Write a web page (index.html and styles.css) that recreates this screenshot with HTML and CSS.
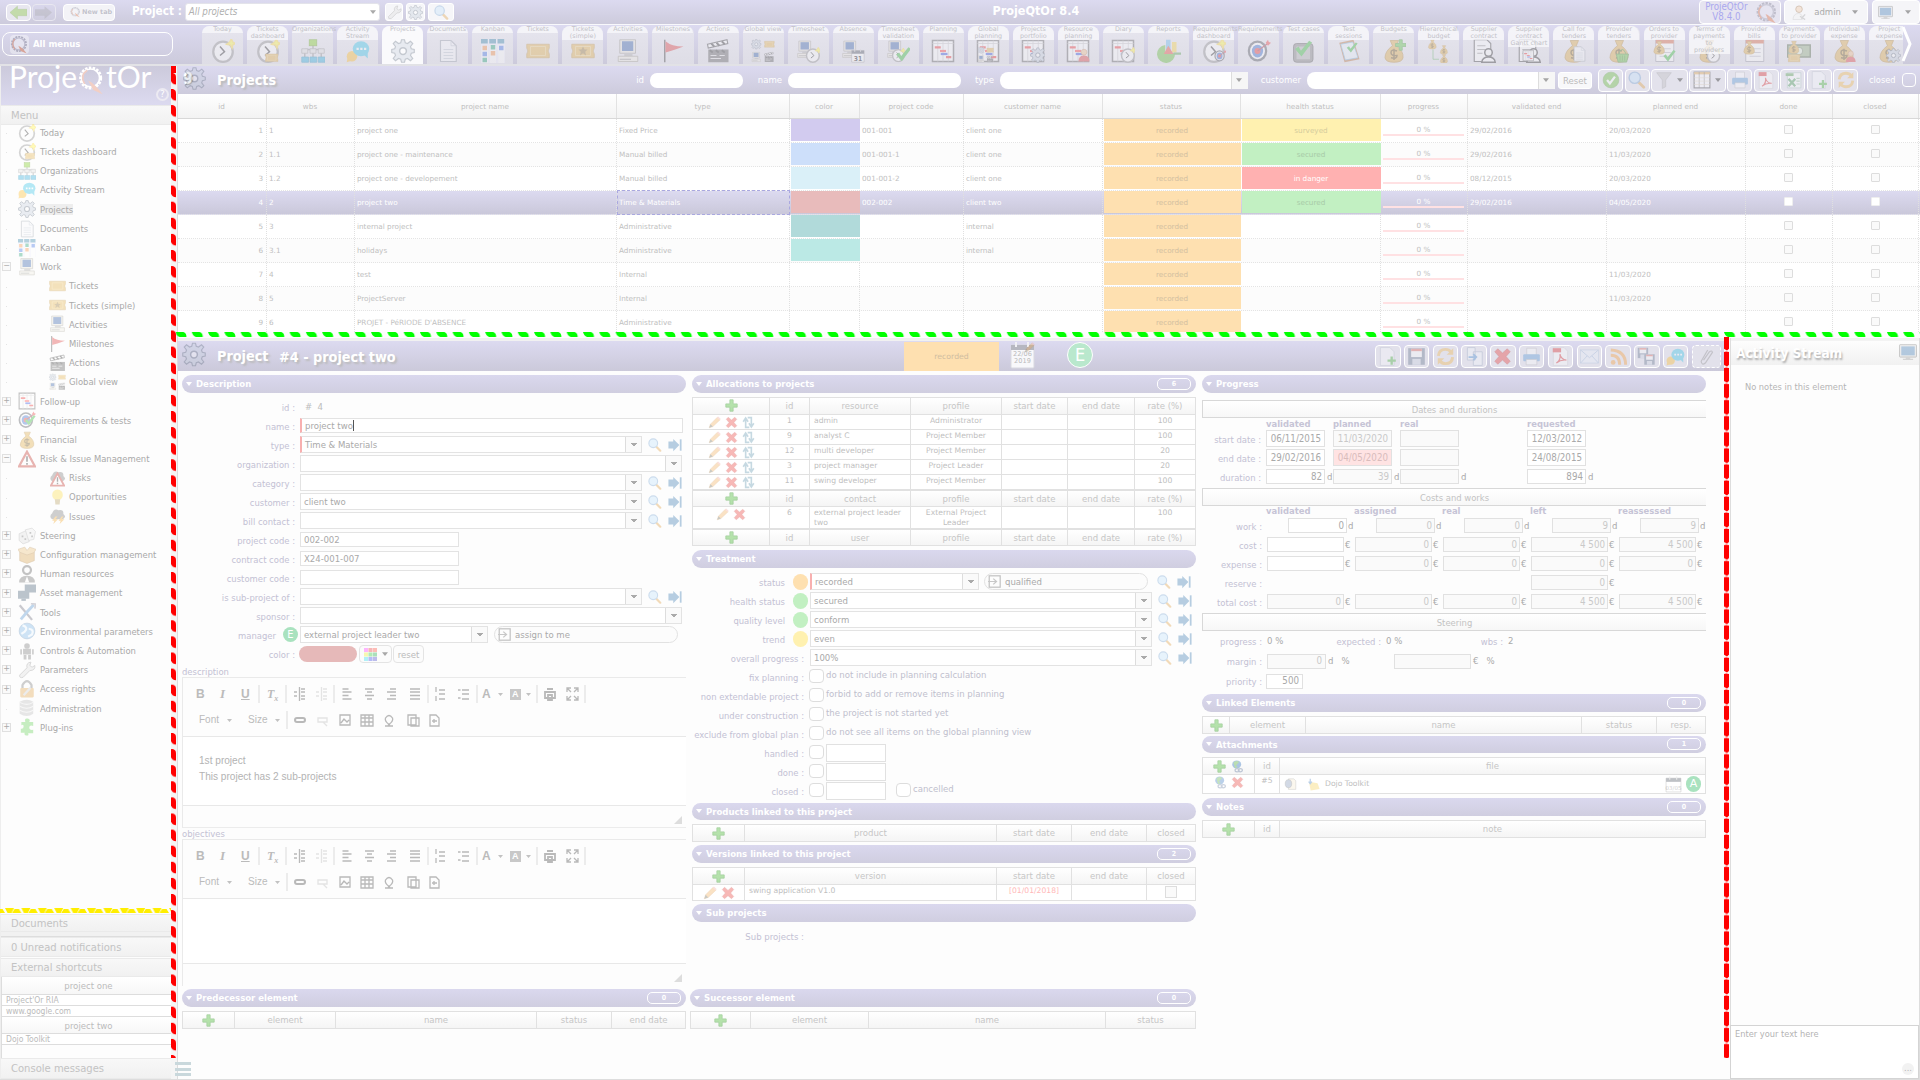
FILE: index.html
```html
<!DOCTYPE html>
<html lang="en">
<head>
<meta charset="utf-8">
<title>ProjeQtOr 8.4</title>
<link rel="stylesheet" href="styles.css">
</head>
<body>
<svg class="defs" aria-hidden="true">
<defs>
<pattern id="dashLeft" width="6" height="16.1" y="6.9" patternUnits="userSpaceOnUse"><path d="M0 0H2Q5 1 5 4V11.500Q1 11.500 0 8Z" fill="#f00"/></pattern>
<pattern id="dashRight" width="6" height="16.1" y="14" patternUnits="userSpaceOnUse"><path d="M0 1Q2 0 5 1V14L3 15.600L0 14Z" fill="#f00"/></pattern>
<pattern id="dashGreen" width="16.3" height="6" x="15.800" patternUnits="userSpaceOnUse"><path d="M0 0H8Q11 1 11 5H4Q1 4 0 0Z" fill="#0f0"/></pattern>
<pattern id="dashYellow" width="16.4" height="6" x="5" patternUnits="userSpaceOnUse"><path d="M0 0H9L6.500 5H2.500Z M7 5L9.500 1H14L16.400 5Z" fill="#fe0"/></pattern>
</defs>
<symbol id="clock" viewBox="0 0 32 32"><ellipse cx="16" cy="17" rx="13" ry="13.500" fill="#fff" stroke="#888" stroke-width="3"/><path d="M12 10L18 17L12 22" fill="none" stroke="#222" stroke-width="2"/><path d="M27 0L29 4L32 6L29 8L28 12L26 8L21 7L25 4Z" fill="#ff3" stroke="#fd3" stroke-width="2"/></symbol>
<symbol id="ticket" viewBox="0 0 32 32"><path d="M1 7H31V12Q28 16 31 20V25H1V20Q4 16 1 12Z" fill="#e2ac3d" stroke="#b98a2d"/><path d="M6 10H26V22H6Z" fill="none" stroke="#f3d68a"/></symbol>
<symbol id="star" viewBox="0 0 32 32"><path d="M16 10L18 14H22L19 17L20 22L16 19L12 22L13 17L10 14H14Z" fill="#97742c"/></symbol>
<symbol id="org" viewBox="0 0 32 32"><path d="M16 8V14M5 14H27M5 14V26M16 14V26M27 14V26" stroke="#888" stroke-width="2"/><rect x="11" y="1" width="10" height="8" fill="#7c1" stroke="#590"/><path d="M1 13h8v6H1zM12 13h8v6h-8zM23 13h8v6h-8z" fill="#ddd" stroke="#888"/><path d="M1 24h9v7H1zM12 24h9v7h-9zM23 24h9v7h-9z" fill="#2ad" stroke="#1789b5"/></symbol>
<symbol id="chat" viewBox="0 0 32 32"><circle cx="8" cy="23" r="7" fill="#fb2"/><path d="M2 25L1 31L7 29Z" fill="#fb2"/><ellipse cx="20" cy="13" rx="11" ry="10" fill="#29c1e8"/><path d="M24 21L29 26L29 17Z" fill="#29c1e8"/><path d="M14 13h3M19 13h3M24 13h3" stroke="#fff" stroke-width="3"/></symbol>
<symbol id="gear" viewBox="0 0 32 32"><path d="M14 1h4l1 4 3 1 4-3 3 3-3 4 1 3 4 1v4l-4 1-1 3 3 4-3 3-4-3-3 1-1 4h-4l-1-4-3-1-4 3-3-3 3-4-1-3-4-1v-4l4-1 1-3-3-4 3-3 4 3 3-1z" fill="#c3cedb" stroke="#5f6c7e" stroke-width="1.500"/><circle cx="16" cy="16" r="4.500" fill="#fff" stroke="#5f6c7e" stroke-width="2"/></symbol>
<symbol id="doc" viewBox="0 0 32 32"><path d="M6 2H20L27 9V30H6Z" fill="#f8f9fc" stroke="#9199a5" stroke-width="1.500"/><path d="M20 2V9H27M10 14H23M10 18H23M10 22H23M10 26H23" fill="none" stroke="#a9b3c2"/></symbol>
<symbol id="kanban" viewBox="0 0 32 32"><rect width="32" height="32" fill="#eef"/><path d="M1 9h8v23H1zM12 9h8v23h-8zM23 9h8v23h-8z" fill="#fff"/><path d="M0 0H9V6H0zM11 0H20V6H11zM22 0H31V6H22z" fill="#2a7ea5"/><path d="M2 9h6v6H2zM13 16h6v6h-6z" fill="#f88b3c"/><path d="M2 17h6v6H2zM24 9h6v6h-6z" fill="#356be5"/><path d="M2 25h6v6H2zM13 8h6v6h-6z" fill="#169c6e"/></symbol>
<symbol id="pc" viewBox="0 0 32 32"><path d="M5 1H26V19H5Z" fill="#e8e5da" stroke="#7c7a70"/><rect x="8" y="3" width="15" height="13" fill="#2857a4"/><path d="M11 19H22V23H11Z" fill="#aaa"/><path d="M3 23H29V30H3Z" fill="#efece1" stroke="#8b8878"/><path d="M5 27H20" stroke="#555"/></symbol>
<symbol id="flag" viewBox="0 0 32 32"><path d="M5 1V31" stroke="#333" stroke-width="2"/><path d="M6 3Q14 10 30 10Q14 16 6 18Z" fill="#d33"/></symbol>
<symbol id="clap" viewBox="0 0 32 32"><path d="M3 14H30V31H3Z" fill="#555"/><path d="M2 7L28 1L29 6L3 12Z" fill="#fff" stroke="#333" stroke-width="1.500"/><path d="M7 6l4 4M14 5l4 4M21 3l4 4M5 15l4 3M13 15l4 3M21 15l4 3" stroke="#222" stroke-width="2.500"/><path d="M6 22H14M18 22H25M6 26H20" stroke="#ddd" stroke-width="1.500"/></symbol>
<symbol id="cal" viewBox="0 0 32 32"><path d="M2 4H30V30H2Z" fill="#fff" stroke="#666"/><path d="M2 4H30V11H2Z" fill="#444b57"/><path d="M9 1V7M22 1V7" stroke="#ccc" stroke-width="2"/></symbol>
<symbol id="calpage" viewBox="0 0 25 27"><rect x="1" y="3" width="23" height="23" rx="1" fill="#f8f8fb" stroke="#d9d9e0"/><path d="M1 3H24V8H1Z" fill="#b6b7c0"/><path d="M6 0V5M18 0V5" stroke="#f0f0f4" stroke-width="2"/></symbol>
<symbol id="tick" viewBox="0 0 32 32"><path d="M2 17L8 13L12 20L26 3L31 6L13 30Z" fill="#28b52b"/></symbol>
<symbol id="plan" viewBox="0 0 32 32"><path d="M2 2H30V30H2Z" fill="#fff" stroke="#555" stroke-width="2"/><path d="M2 6H30M9 2V30M16 2V30M23 2V30" stroke="#bbb"/><path d="M5 11H13M20 24H27" stroke="#e22" stroke-width="3"/><path d="M12 16H20" stroke="#f33" stroke-width="3"/><path d="M13 20H22" stroke="#24d" stroke-width="3"/></symbol>
<symbol id="man" viewBox="0 0 32 32"><circle cx="16" cy="9" r="7" fill="#f0bd86" stroke="#a44f23"/><path d="M3 31Q3 17 16 17T29 31Z" fill="#d33"/></symbol>
<symbol id="chart" viewBox="0 0 32 32"><path d="M12 1h6v17h-6z" fill="#5bb3ec"/><path d="M20 4h6v14h-6z" fill="#f7d038"/><path d="M11 8V18L24 19A12 12 0 1 1 11 8Z" fill="#5bb92c"/><path d="M15 9L22 20H9Z" fill="#e53b2b"/><path d="M22 18H32V21H22Z" fill="#4a9a42"/></symbol>
<symbol id="target" viewBox="0 0 32 32"><ellipse cx="14" cy="16" rx="13" ry="14" fill="#44484f"/><ellipse cx="14" cy="16" rx="10" ry="11" fill="#fff"/><ellipse cx="14" cy="16" rx="7.500" ry="8.500" fill="#2b63c9"/><circle cx="14" cy="16" r="4" fill="#e22"/><path d="M14 16L29 5" stroke="#923" stroke-width="2"/><path d="M25 5L28 1L29 4L32 5L28 9Z" fill="#e33"/></symbol>
<symbol id="case" viewBox="0 0 32 32"><rect x="2" y="6" width="26" height="25" rx="4" fill="#777" stroke="#333"/><rect x="6" y="10" width="18" height="17" fill="#aaa"/></symbol>
<symbol id="clip" viewBox="0 0 32 32"><path d="M3 5L22 1L30 27L10 31Z" fill="#b96b2e"/><path d="M5 7L21 4L28 25L11 28Z" fill="#e7f2fb" stroke="#5ea7e0"/></symbol>
<symbol id="bag" viewBox="0 0 32 32"><path d="M11 2H22L19 9Q29 16 28 25Q27 31 16 31T4 25Q4 16 14 9Z" fill="#dda63a" stroke="#a87415"/><path d="M20 16Q12 13 12 18T20 22Q20 27 12 25M16 13V28" fill="none" stroke="#5f430a" stroke-width="2"/></symbol>
<symbol id="plus" viewBox="0 0 32 32"><path d="M12 2H20V12H30V20H20V30H12V20H2V12H12Z" fill="#4fbf38" stroke="#2a921c" stroke-width="2"/></symbol>
<symbol id="contract" viewBox="0 0 32 32"><path d="M3 1H20L25 6V30H3Z" fill="#fff" stroke="#333" stroke-width="1.500"/><path d="M7 9H18M7 14H18M7 19H14" stroke="#555"/><circle cx="22" cy="18" r="5" fill="#fff" stroke="#222" stroke-width="2"/><path d="M13 31Q14 24 22 24T31 31Z" fill="#fff" stroke="#222" stroke-width="2"/></symbol>
<symbol id="basket" viewBox="0 0 32 32"><path d="M3 13H29L25 30H7Z" fill="#5bbf30" stroke="#37831b" stroke-width="2"/><path d="M8 13Q16 -7 24 13M11 16V27M16 16V27M21 16V27" fill="none" stroke="#37831b" stroke-width="2"/></symbol>
<symbol id="bill" viewBox="0 0 32 32"><path d="M5 1H29V30H5Z" fill="#fff" stroke="#778"/><path d="M5 1H29V6H5Z" fill="#d3542e"/><path d="M10 13H25M10 18H25M10 23H25" stroke="#99a"/></symbol>
<symbol id="money" viewBox="0 0 32 32"><path d="M1 8H31V24H1Z" fill="#8aa878" stroke="#455c39" stroke-width="2"/><circle cx="16" cy="16" r="5" fill="#dfeed5" stroke="#455c39"/></symbol>
<symbol id="warn" viewBox="0 0 32 32"><path d="M16 3L30 29H2Z" fill="#fff" stroke="#c02a20" stroke-width="4"/><path d="M16 11V21M16 23V26" stroke="#222" stroke-width="3"/></symbol>
<symbol id="cloud" viewBox="0 0 32 32"><path d="M6 22Q-1 17 6 11Q9 1 18 5Q28 3 27 12Q34 18 26 22Z" fill="#777"/></symbol>
<symbol id="bolt" viewBox="0 0 32 32"><path d="M12 17L6 25H10L8 31L17 22H12L16 17ZM24 17L18 25H22L20 31L29 22H24L27 17Z" fill="#f5a623"/></symbol>
<symbol id="bulb" viewBox="0 0 32 32"><circle cx="16" cy="12" r="10" fill="#fd4"/><path d="M11 20H21L20 30H12Z" fill="#b59b5a"/></symbol>
<symbol id="dice" viewBox="0 0 32 32"><path d="M2 12L13 7L20 13V26L9 30L2 24Z" fill="#ddd" stroke="#888"/><path d="M13 5L25 2L31 8L28 22L19 24Z" fill="#eee" stroke="#888"/><path d="M8 15v3M13 20v3M22 9v3M25 15v3" stroke="#666" stroke-width="3"/></symbol>
<symbol id="box" viewBox="0 0 32 32"><path d="M3 11H29V26L16 31L3 26Z" fill="#d9a048" stroke="#a06b1e"/><path d="M3 11L0 6L12 2L16 8L21 2L32 6L28 12L16 16Z" fill="#e9bd72" stroke="#a06b1e"/></symbol>
<symbol id="hr" viewBox="0 0 32 32"><circle cx="16" cy="9" r="7" fill="#fff" stroke="#555" stroke-width="4"/><path d="M2 31Q2 19 16 19T30 31Z" fill="#666"/><path d="M16 20L12 31H20Z" fill="#fff"/></symbol>
<symbol id="asset" viewBox="0 0 32 32"><path d="M12 1H32V15H12zM0 12H20V26H0z" fill="#3f5a70"/><path d="M6 26h8v4H6z" fill="#3f5a70"/></symbol>
<symbol id="tools" viewBox="0 0 32 32"><path d="M3 4L25 30" stroke="#667" stroke-width="4"/><path d="M28 3L16 16L5 29" stroke="#4d90cf" stroke-width="5"/><path d="M23 1L31 2L30 10" fill="none" stroke="#889" stroke-width="3"/></symbol>
<symbol id="wrench" viewBox="0 0 32 32"><path d="M30 8L25 11L21 8L23 2Q14 3 16 12L3 25Q2 31 9 29L21 17Q31 17 30 8Z" fill="#ddd" stroke="#888" stroke-width="1.500"/></symbol>
<symbol id="globe" viewBox="0 0 32 32"><circle cx="16" cy="16" r="14" fill="#77b4e6" stroke="#3a6ca3"/><path d="M8 6Q19 9 12 17L6 21M19 12Q29 13 25 22L18 26" fill="none" stroke="#e9f5ff" stroke-width="4"/></symbol>
<symbol id="robot" viewBox="0 0 32 32"><circle cx="16" cy="7" r="5" fill="#777"/><path d="M9 12H23V22H9zM10 23h5v8h-5zM18 23h5v8h-5zM4 13h3v9H4zM25 13h3v9h-3z" fill="#777"/></symbol>
<symbol id="lock" viewBox="0 0 32 32"><path d="M8 16V9Q16 -5 24 9V16" fill="none" stroke="#777" stroke-width="4"/><rect x="4" y="14" width="24" height="17" rx="2" fill="#e0a143"/><path d="M10 27L22 14" stroke="#ccc" stroke-width="4"/></symbol>
<symbol id="db" viewBox="0 0 32 32"><path d="M3 5Q16 -2 27 5V26Q16 34 3 26Z" fill="#bbb"/><path d="M3 6Q16 13 27 6M3 13Q16 20 27 13M3 20Q16 27 27 20" fill="none" stroke="#eee" stroke-width="2"/></symbol>
<symbol id="puzzle" viewBox="0 0 32 32"><path d="M6 7H13Q11 0 17 1T20 7H27V14Q20 12 20 17T27 21V27H18Q20 32 15 31T12 26H5V19Q10 20 10 15T6 13Z" fill="#5fd14f"/></symbol>
<symbol id="mag" viewBox="0 0 32 32"><path d="M18 19L28 29" stroke="#dd9a37" stroke-width="5" stroke-linecap="round"/><circle cx="12" cy="12" r="10" fill="#bfe0fb" stroke="#6f9fd0" stroke-width="2.500"/></symbol>
<symbol id="goto" viewBox="0 0 32 32"><path d="M1 8H12V2L26 16L12 30V24H1Z" fill="#2f74ae"/><path d="M29 3V29" stroke="#2f74ae" stroke-width="4"/></symbol>
<symbol id="pencil" viewBox="0 0 32 32"><path d="M3 29L6 20L23 3L30 9L12 26Z" fill="#f3ab55" stroke="#c77f2d"/><path d="M3 29L6 20L12 26Z" fill="#665"/><path d="M22 4L25 1L31 7L29 10Z" fill="#f3a7a0"/></symbol>
<symbol id="cross" viewBox="0 0 32 32"><path d="M3 8L8 3L16 10L24 3L29 8L22 16L29 24L24 29L16 22L8 29L3 24L10 16Z" fill="#e8322c" stroke="#b91c1c"/></symbol>
<symbol id="swap" viewBox="0 0 32 32"><path d="M18 28H9V8M3 14L9 5L15 14M14 4H23V24M17 18L23 27L29 18" fill="none" stroke="#5c93ab" stroke-width="4"/></symbol>
<symbol id="funnel" viewBox="0 0 32 32"><path d="M3 3H29L19 16V28L13 31V16Z" fill="#bbb" stroke="#888"/></symbol>
<symbol id="cols" viewBox="0 0 32 32"><rect x="2" y="2" width="28" height="28" fill="#fff" stroke="#333" stroke-width="2"/><path d="M2 4H30" stroke="#e2a23b" stroke-width="4"/><path d="M11 2V30M20 2V30" stroke="#333"/><path d="M2 12H30M2 18H30M2 24H30" stroke="#d9c69c"/></symbol>
<symbol id="print" viewBox="0 0 32 32"><path d="M8 2H24V14H8Z" fill="#fff" stroke="#999"/><rect x="2" y="12" width="28" height="12" rx="2" fill="#4f94d4"/><path d="M7 21H25V30H7Z" fill="#fff" stroke="#999"/></symbol>
<symbol id="pdf" viewBox="0 0 32 32"><path d="M4 1H22L28 7V31H4Z" fill="#fff" stroke="#bbb"/><rect x="3" y="2" width="14" height="7" fill="#d22"/><path d="M9 27Q17 22 15 12Q17 21 26 22Q16 21 9 27Z" fill="none" stroke="#d22" stroke-width="2"/></symbol>
<symbol id="csv" viewBox="0 0 32 32"><path d="M6 3H30V30H6Z" fill="#fff" stroke="#7a9"/><path d="M3 4H17V9H3Z" fill="#4a9a42"/><path d="M8 14L20 27M20 14L8 27" stroke="#3b9448" stroke-width="4"/><path d="M22 13h6M22 18h6M22 23h6" stroke="#8bbf8f" stroke-width="2"/></symbol>
<symbol id="newdoc" viewBox="0 0 32 32"><path d="M4 1H20L27 8V31H4Z" fill="#fafbfe" stroke="#9aa4b3"/><path d="M23 16V30M16 23H30" stroke="#3cae2c" stroke-width="4"/></symbol>
<symbol id="refresh" viewBox="0 0 32 32"><path d="M4 15Q5 4 16 4Q22 4 25 8M28 17Q27 28 16 28Q10 28 7 24" fill="none" stroke="#f1b541" stroke-width="5"/><path d="M29 2V13H18ZM3 30V19H14Z" fill="#f1b541"/></symbol>
<symbol id="ok" viewBox="0 0 32 32"><circle cx="16" cy="16" r="14" fill="#5cb82b" stroke="#3f8f17"/><path d="M9 16L14 22L23 10" fill="none" stroke="#fff" stroke-width="4"/></symbol>
<symbol id="save" viewBox="0 0 32 32"><path d="M2 2H30V30H2Z" fill="#5b6d86"/><path d="M7 3H25V17H7Z" fill="#fff"/><path d="M7 3H25V7H7Z" fill="#e05a4a"/><path d="M9 20H23V30H9Z" fill="#c9d2de"/></symbol>
<symbol id="copy" viewBox="0 0 32 32"><path d="M4 1H17V22H4zM14 8H29V31H14z" fill="#f6f9fd" stroke="#92a4bd" stroke-width="1.500"/><path d="M6 17H17M14 12L19 17L14 22" fill="none" stroke="#3e88d0" stroke-width="3"/></symbol>
<symbol id="mail" viewBox="0 0 32 32"><rect x="1" y="5" width="30" height="22" fill="#eaf2fc" stroke="#92b0d6"/><path d="M1 5L16 18L31 5M1 27L12 15M31 27L20 15" fill="none" stroke="#92b0d6" stroke-width="1.500"/></symbol>
<symbol id="rss" viewBox="0 0 32 32"><circle cx="7" cy="26" r="4" fill="#f79a2c"/><path d="M3 14Q18 14 18 30M3 5Q28 6 28 30" fill="none" stroke="#f79a2c" stroke-width="5"/></symbol>
<symbol id="attach" viewBox="0 0 32 32"><path d="M11 22L21 8Q25 5 26 9L14 27Q8 32 7 24L18 5" fill="none" stroke="#888" stroke-width="2"/></symbol>
<symbol id="weblink" viewBox="0 0 32 32"><ellipse cx="14" cy="11" rx="11" ry="10" fill="#3978c4"/><path d="M6 6Q14 0 20 5L12 14L17 17L10 20Z" fill="#59b043"/><path d="M10 25a5 4 0 1 0 10 0a5 4 0 1 0-10 0M18 25a5 4 0 1 0 10 0a5 4 0 1 0-10 0" fill="none" stroke="#6a7fa3" stroke-width="3"/></symbol>
<symbol id="note" viewBox="0 0 32 32"><path d="M5 9L26 13L31 27L9 31Z" fill="#f5cf4e"/><path d="M8 2V14M4 9L8 14L12 9" stroke="#3977bf" stroke-width="3" fill="none"/></symbol>
<symbol id="file" viewBox="0 0 32 32"><path d="M11 2H24L29 7V28H11Z" fill="#f4ead0" stroke="#555"/><ellipse cx="11" cy="14" rx="8" ry="10" fill="#7d93b5" stroke="#333"/></symbol>
<symbol id="monitor" viewBox="0 0 32 32"><rect x="1" y="3" width="30" height="22" rx="1" fill="#ddd" stroke="#555" stroke-width="1.500"/><rect x="4" y="6" width="24" height="16" fill="#2f6fae"/><path d="M12 25H20V28H25V30H7V28H12Z" fill="#999"/></symbol>
<symbol id="user" viewBox="0 0 32 32"><circle cx="15" cy="9" r="7" fill="#f0c39a" stroke="#9a6b3d" stroke-width="2"/><path d="M2 31Q3 18 14 18Q20 18 22 24V31Z" fill="#f0f0f0" stroke="#999"/><path d="M17 24L28 31M28 20L20 29" stroke="#999" stroke-width="3"/></symbol>
<symbol id="qgear" viewBox="0 0 32 32"><circle cx="15" cy="15" r="12" fill="none" stroke="#778" stroke-width="3" stroke-dasharray="3.500 1.500"/><circle cx="15" cy="15" r="10" fill="none" stroke="#99a" stroke-width="2"/><path d="M14 18Q20 20 28 31L18 27Z" fill="#e2642b"/><path d="M8 24Q1 14 8 7" fill="none" stroke="#e2642b" stroke-width="2"/></symbol>
<symbol id="arrowL" viewBox="0 0 32 26"><path d="M0 13L14 1V7H32V19H14V25Z" fill="#7dc52a" stroke="#5a9d14"/></symbol>
<symbol id="arrowR" viewBox="0 0 32 26"><path d="M32 13L18 1V7H0V19H18V25Z" fill="#aaa"/></symbol>
<symbol id="enter" viewBox="0 0 32 32"><rect x="3" y="2" width="27" height="28" fill="#fff" stroke="#555" stroke-width="3"/><path d="M0 16H19M13 9L21 16L13 23" stroke="#666" stroke-width="3" fill="none"/></symbol>
<symbol id="palette" viewBox="0 0 32 32"><path d="M0 0h10v10H0z" fill="#f3f"/><path d="M11 0h10v10H11z" fill="#e33"/><path d="M22 0h10v10H22z" fill="#f43"/><path d="M0 11h10v10H0z" fill="#ee2"/><path d="M11 11h10v10H11z" fill="#2c3"/><path d="M22 11h10v10H22z" fill="#1a4"/><path d="M0 22h10v10H0z" fill="#2de"/><path d="M11 22h10v10H11z" fill="#34e"/><path d="M22 22h10v10H22z" fill="#44c"/></symbol>
<symbol id="globalv" viewBox="0 0 32 32"><use href="#gear" width="14" height="14"/><use href="#ticket" x="17" width="15" height="14"/><use href="#pc" y="17" width="14" height="14"/><use href="#clap" x="17" y="17" width="14" height="14"/></symbol>
<symbol id="caret" viewBox="0 0 8 5"><path d="M0 0H8L4 5Z"/></symbol>
<symbol id="tb1" viewBox="0 0 400 20">
<g fill="none" stroke="#777" stroke-width="1.300"><path d="M60 1V19M87 1V19M135 1V19M229 1V19M278 1V19M338 1V19M386 1V19" stroke="#bbb" stroke-width="1"/>
<path d="M95 8h3M95 12h3M102 5h4M102 8h4M102 12h4M102 15h4M100.500 3v14M143.500 5h6M143.500 8h9M143.500 11.500h6M143.500 15h9M166 5h9M168 8h5M166 11.500h9M168 15h5M191 5h6M188 8h9M191 11.500h6M188 15h9M211 5h10M211 8h10M211 11.500h10M211 15h10M240 6h6M240 10h6M240 15h6M237 3v5M237 12v5M263 6h7M263 10h7M263 15h7M259 6h2.500M259 14h2.500"/><path d="M117 8h3M117 12h3M124 5h4M124 8h4M124 12h4M124 15h4M122.500 3v14" stroke="#ccc"/><path d="M346 8h10v6h-10zM348 5h6M349 11h4v5h-4z" stroke-width="1.800"/><path d="M368 8V4h4M375 4h4v4M379 12v4h-4M372 16h-4v-4M368 4l4 4M379 4l-4 4M379 16l-4-4M368 16l4-4"/></g>
<path d="M299 9h5l-2.500 3zM327 9h5l-2.500 3z" fill="#888"/></symbol>
<symbol id="tb2" viewBox="0 0 250 20"><g fill="none" stroke="#777" stroke-width="1.300"><path d="M88 1V19" stroke="#bbb" stroke-width="1"/><rect x="96" y="8" width="10" height="4" rx="2" stroke-width="2"/><path d="M119 8h9v4h-9zM124 12l4 4" stroke="#ccc"/><path d="M141 5h10v10h-10zM142 13l3-4 3 3 2-2"/><path d="M162 5h12v11h-12zM162 8h12M162 12h12M166 5v11M170 5v11"/><path d="M186 16h3.500v-2q-4-3-3-6 3.500-5 7 0 1 3-3 6v2h3.500"/><path d="M209 5h8v10h-8zM212 8h8v8h-8z"/><path d="M231 5h6l3 3v8h-9zM233 11h5M235 9v4"/></g><path d="M28 9h5l-2.500 3zM76 9h5l-2.500 3z" fill="#888"/></symbol>
</svg>

<div class="app">
<header class="topbar">
  <span class="tbtn w25"><svg class="i17"><use href="#arrowL"/></svg></span>
  <span class="tbtn w24 off"><svg class="i17"><use href="#arrowR"/></svg></span>
  <span class="tbtn newtab"><svg class="i11"><use href="#qgear"/></svg>New tab</span>
  <b class="proj">Project :</b>
  <span class="projsel"><em>All projects</em><svg class="caret"><use href="#caret"/></svg></span>
  <span class="sbtn"><svg class="i15"><use href="#wrench"/></svg></span>
  <span class="sbtn"><svg class="i15"><use href="#gear"/></svg></span>
  <span class="sbtn wide"><svg class="i15"><use href="#mag"/></svg></span>
  <b class="apptitle">ProjeQtOr 8.4</b>
  <span class="ver"><span>ProjeQtOr<br>V8.4.0</span><svg class="i23"><use href="#qgear"/></svg></span>
  <span class="usr"><svg class="i17"><use href="#user"/></svg>admin<svg class="caret"><use href="#caret"/></svg></span>
  <span class="scr"><svg class="i17"><use href="#monitor"/></svg><svg class="caret"><use href="#caret"/></svg></span>
</header>

<nav class="tabbar">
  <span class="allmenus"><svg class="i21"><use href="#qgear"/></svg>All menus</span>
  <div class="tabs">
    <div class="tab"><svg viewBox="0 0 32 32"><use href="#clock"/></svg><span>Today</span></div>
    <div class="tab"><svg viewBox="0 0 32 32"><use href="#clock"/><use href="#ticket" x="12" y="16" width="18" height="18"/></svg><span>Tickets<br>dashboard</span></div>
    <div class="tab"><svg viewBox="0 0 32 32"><use href="#org"/></svg><span>Organizations</span></div>
    <div class="tab"><svg viewBox="0 0 32 32"><use href="#chat"/></svg><span>Activity<br>Stream</span></div>
    <div class="tab on"><svg viewBox="0 0 32 32"><use href="#gear"/></svg><span>Projects</span></div>
    <div class="tab"><svg viewBox="0 0 32 32"><use href="#doc"/></svg><span>Documents</span></div>
    <div class="tab"><svg viewBox="0 0 32 32"><use href="#kanban"/></svg><span>Kanban</span></div>
    <div class="tab"><svg viewBox="0 0 32 32"><use href="#ticket"/></svg><span>Tickets</span></div>
    <div class="tab"><svg viewBox="0 0 32 32"><use href="#ticket"/><use href="#star"/></svg><span>Tickets<br>(simple)</span></div>
    <div class="tab"><svg viewBox="0 0 32 32"><use href="#pc"/></svg><span>Activities</span></div>
    <div class="tab"><svg viewBox="0 0 32 32"><use href="#flag"/></svg><span>Milestones</span></div>
    <div class="tab"><svg viewBox="0 0 32 32"><use href="#clap"/></svg><span>Actions</span></div>
    <div class="tab"><svg viewBox="0 0 32 32"><use href="#globalv"/></svg><span>Global view</span></div>
    <div class="tab"><svg viewBox="0 0 32 32"><use href="#pc" width="24" height="28"/><use href="#clock" x="12" y="11" width="21" height="21"/></svg><span>Timesheet</span></div>
    <div class="tab"><svg viewBox="0 0 32 32"><use href="#pc" width="24" height="28"/><use href="#cal" x="13" y="13" width="19" height="19"/><text x="17" y="29" font-size="9" font-weight="bold">31</text></svg><span>Absence</span></div>
    <div class="tab"><svg viewBox="0 0 32 32"><use href="#pc" width="24" height="28"/><use href="#clock" x="7" y="12" width="19" height="19"/><use href="#tick" x="12" y="9" width="22" height="22"/></svg><span>Timesheet<br>validation</span></div>
    <div class="tab"><svg viewBox="0 0 32 32"><use href="#plan"/></svg><span>Planning</span></div>
    <div class="tab"><svg viewBox="0 0 32 32"><use href="#plan"/><use href="#globalv" x="2" y="10" width="22" height="22"/></svg><span>Global<br>planning</span></div>
    <div class="tab"><svg viewBox="0 0 32 32"><use href="#plan"/><use href="#gear" x="12" y="11" width="21" height="21"/></svg><span>Projects<br>portfolio</span></div>
    <div class="tab"><svg viewBox="0 0 32 32"><use href="#plan"/><use href="#man" x="15" y="11" width="18" height="21"/></svg><span>Resource<br>planning</span></div>
    <div class="tab"><svg viewBox="0 0 32 32"><use href="#plan"/><use href="#clock" x="12" y="11" width="21" height="21"/></svg><span>Diary</span></div>
    <div class="tab"><svg viewBox="0 0 32 32"><use href="#chart"/></svg><span>Reports</span></div>
    <div class="tab"><svg viewBox="0 0 32 32"><use href="#clock"/><use href="#target" x="16" y="14" width="17" height="17"/></svg><span>Requirements<br>dashboard</span></div>
    <div class="tab"><svg viewBox="0 0 32 32"><use href="#target"/></svg><span>Requirements</span></div>
    <div class="tab"><svg viewBox="0 0 32 32"><use href="#case"/><use href="#tick" y="0" width="30" height="25"/></svg><span>Test cases</span></div>
    <div class="tab"><svg viewBox="0 0 32 32"><use href="#clip"/><use href="#tick" x="10" y="3" width="20" height="16"/></svg><span>Test<br>sessions</span></div>
    <div class="tab"><svg viewBox="0 0 32 32"><use href="#bag"/><use href="#plus" x="17" y="0" width="16" height="16"/></svg><span>Budgets</span></div>
    <div class="tab"><svg viewBox="0 0 32 32"><use href="#bag" width="14" height="14"/><use href="#bag" x="16" y="8" width="13" height="13"/><use href="#bag" x="16" y="20" width="13" height="13"/><path d="M8 14V27H16" fill="none" stroke="#4a4"/></svg><span>Hierarchical<br>budget</span></div>
    <div class="tab"><svg viewBox="0 0 32 32"><use href="#contract"/></svg><span>Supplier<br>contract</span></div>
    <div class="tab"><svg viewBox="0 0 32 32"><use href="#contract"/><use href="#plan" x="6" y="14" width="18" height="16"/></svg><span>Supplier<br>contract<br>Gantt chart</span></div>
    <div class="tab"><svg viewBox="0 0 32 32"><use href="#bag"/><use href="#doc" x="12" y="9" width="22" height="22"/></svg><span>Call for<br>tenders</span></div>
    <div class="tab"><svg viewBox="0 0 32 32"><use href="#bag"/><use href="#basket" x="10" y="12" width="21" height="20"/></svg><span>Provider<br>tenders</span></div>
    <div class="tab"><svg viewBox="0 0 32 32"><use href="#bill"/><use href="#bag" y="2" width="19" height="19"/><use href="#tick" x="13" y="13" width="20" height="18"/></svg><span>Orders to<br>provider</span></div>
    <div class="tab"><svg viewBox="0 0 32 32"><use href="#bag"/><use href="#clock" x="12" y="12" width="20" height="20"/></svg><span>Terms of<br>payments<br>to<br>providers</span></div>
    <div class="tab"><svg viewBox="0 0 32 32"><use href="#bill"/><use href="#bag" y="2" width="19" height="19"/></svg><span>Provider<br>bills</span></div>
    <div class="tab"><svg viewBox="0 0 32 32"><use href="#money"/><use href="#bag" y="2" width="18" height="18"/><use href="#ticket" x="1" y="17" width="17" height="17"/></svg><span>Payments<br>to provider</span></div>
    <div class="tab"><svg viewBox="0 0 32 32"><use href="#bag"/><use href="#man" x="17" y="14" width="16" height="18"/></svg><span>Individual<br>expense</span></div>
    <div class="tab"><svg viewBox="0 0 32 32"><use href="#bag"/><use href="#gear" x="12" y="12" width="20" height="20"/></svg><span>Project<br>expense</span></div>
  </div>
  <svg class="more" viewBox="0 0 12 36"><path d="M2 1L9 18L2 35" fill="none" stroke="#fff" stroke-width="3"/></svg>
</nav>

<div class="main">
<aside class="side">
  <div class="logo"><span>Proje<svg viewBox="0 0 30 34"><circle cx="14" cy="14" r="12" fill="none" stroke="#fff" stroke-width="3" stroke-dasharray="3 1.500"/><circle cx="14" cy="14" r="10.500" fill="none" stroke="#fff" stroke-width="2"/><path d="M7 21Q1 11 10 5" fill="none" stroke="#f0cdc4" stroke-width="2"/><path d="M11 17Q18 20 28 33L17 28Z" fill="#f3cfc4"/></svg>tOr</span><i>?</i></div>
  <div class="acc menuhead">Menu</div>
  <div class="tree">
    <div><svg><use href="#clock"/></svg>Today</div>
    <div><svg><use href="#clock"/><use href="#ticket" x="7" y="8" width="10" height="10"/></svg>Tickets dashboard</div>
    <div><svg><use href="#org"/></svg>Organizations</div>
    <div><svg><use href="#chat"/></svg>Activity Stream</div>
    <div><svg><use href="#gear"/></svg><mark>Projects</mark></div>
    <div><svg><use href="#doc"/></svg>Documents</div>
    <div><svg><use href="#kanban"/></svg>Kanban</div>
    <div class="x"><b>−</b><svg><use href="#pc"/></svg>Work</div>
    <div class="c"><svg><use href="#ticket"/></svg>Tickets</div>
    <div class="c"><svg><use href="#ticket"/><use href="#star"/></svg>Tickets (simple)</div>
    <div class="c"><svg><use href="#pc"/></svg>Activities</div>
    <div class="c"><svg><use href="#flag"/></svg>Milestones</div>
    <div class="c"><svg><use href="#clap"/></svg>Actions</div>
    <div class="c"><svg><use href="#globalv"/></svg>Global view</div>
    <div class="x"><b>+</b><svg><use href="#plan"/></svg>Follow-up</div>
    <div class="x"><b>+</b><svg><use href="#target"/><use href="#tick" x="6" y="3" width="12" height="12"/></svg>Requirements &amp; tests</div>
    <div class="x"><b>+</b><svg><use href="#bag"/></svg>Financial</div>
    <div class="x"><b>−</b><svg><use href="#warn"/></svg>Risk &amp; Issue Management</div>
    <div class="c"><svg><use href="#cloud"/><use href="#warn" x="1" y="3" width="15" height="15"/></svg>Risks</div>
    <div class="c"><svg><use href="#bulb"/></svg>Opportunities</div>
    <div class="c"><svg><use href="#cloud"/><use href="#bolt"/></svg>Issues</div>
    <div class="x"><b>+</b><svg><use href="#dice"/></svg>Steering</div>
    <div class="x"><b>+</b><svg><use href="#box"/></svg>Configuration management</div>
    <div class="x"><b>+</b><svg><use href="#hr"/></svg>Human resources</div>
    <div class="x"><b>+</b><svg><use href="#asset"/></svg>Asset management</div>
    <div class="x"><b>+</b><svg><use href="#tools"/></svg>Tools</div>
    <div class="x"><b>+</b><svg><use href="#globe"/></svg>Environmental parameters</div>
    <div class="x"><b>+</b><svg><use href="#robot"/></svg>Controls &amp; Automation</div>
    <div class="x"><b>+</b><svg><use href="#wrench"/></svg>Parameters</div>
    <div class="x"><b>+</b><svg><use href="#lock"/></svg>Access rights</div>
    <div><svg><use href="#db"/></svg>Administration</div>
    <div class="x"><b>+</b><svg><use href="#puzzle"/></svg>Plug-ins</div>
  </div>
  <svg class="ydash"><rect width="171" height="6" fill="url(#dashYellow)"/></svg>
  <div class="acc a1">Documents</div>
  <div class="sp"></div>
  <div class="acc a2">0 Unread notifications</div>
  <div class="acc a3">External shortcuts</div>
  <div class="links"><p class="h">project one</p><p>Project'Or RIA</p><p>www.google.com</p><p class="h">project two</p><p>Dojo Toolkit</p></div>
  <div class="acc a4">Console messages</div>
</aside>
<div class="split"><svg><rect width="5" height="7" fill="#f00"/><rect width="6" height="992" fill="url(#dashLeft)"/></svg></div>

<div class="content">
<section class="list">
  <div class="listhead">
    <span class="cnt"><svg><use href="#gear"/></svg><b>9</b></span><h1>Projects</h1>
    <div class="filters">
      <label>id</label><i class="pill f1"></i><label>name</label><i class="pill f2"></i><label>type</label><i class="combo"><svg class="caret"><use href="#caret"/></svg></i><label>customer</label><i class="combo"><svg class="caret"><use href="#caret"/></svg></i>
      <span class="reset">Reset</span>
    </div>
    <div class="tools">
      <span><svg><use href="#ok"/></svg></span><span><svg><use href="#mag"/></svg></span><span class="w"><svg><use href="#funnel"/></svg><svg class="caret"><use href="#caret"/></svg></span><span class="w"><svg><use href="#cols"/></svg><svg class="caret"><use href="#caret"/></svg></span><span><svg><use href="#print"/></svg></span><span><svg><use href="#pdf"/></svg></span><span><svg><use href="#csv"/></svg></span><span><svg><use href="#newdoc"/></svg></span><span><svg><use href="#refresh"/></svg></span>
    </div>
    <label class="cl">closed</label><i class="ck"></i>
  </div>
  <div class="row head"><span>id</span><span>wbs</span><span>project name</span><span>type</span><span>color</span><span>project code</span><span>customer name</span><span>status</span><span>health status</span><span>progress</span><span>validated end</span><span>planned end</span><span>done</span><span>closed</span></div>
  <div class="row"><span class="r">1</span><span>1</span><span>project one</span><span>Fixed Price</span><span class="k violet"></span><span>001-001</span><span>client one</span><span class="k rec">recorded</span><span class="k yel">surveyed</span><span class="pg">0 %</span><span>29/02/2016</span><span>20/03/2020</span><span class="cb"><i></i></span><span class="cb"><i></i></span></div>
  <div class="row alt"><span class="r">2</span><span>1.1</span><span>project one - maintenance</span><span>Manual billed</span><span class="k blue"></span><span>001-001-1</span><span>client one</span><span class="k rec">recorded</span><span class="k grn">secured</span><span class="pg">0 %</span><span>29/02/2016</span><span>11/03/2020</span><span class="cb"><i></i></span><span class="cb"><i></i></span></div>
  <div class="row"><span class="r">3</span><span>1.2</span><span>project one - developement</span><span>Manual billed</span><span class="k sky"></span><span>001-001-2</span><span>client one</span><span class="k rec">recorded</span><span class="k red">in danger</span><span class="pg">0 %</span><span>08/12/2015</span><span>20/03/2020</span><span class="cb"><i></i></span><span class="cb"><i></i></span></div>
  <div class="row sel"><span class="r">4</span><span>2</span><span>project two</span><span class="foc">Time &amp; Materials</span><span class="k brick"></span><span>002-002</span><span>client two</span><span class="k rec">recorded</span><span class="k grn">secured</span><span class="pg">0 %</span><span>29/02/2016</span><span>04/05/2020</span><span class="cb"><i></i></span><span class="cb"><i></i></span></div>
  <div class="row"><span class="r">5</span><span>3</span><span>internal project</span><span>Administrative</span><span class="k teal"></span><span></span><span>internal</span><span class="k rec">recorded</span><span></span><span class="pg">0 %</span><span></span><span></span><span class="cb"><i></i></span><span class="cb"><i></i></span></div>
  <div class="row alt"><span class="r">6</span><span>3.1</span><span>holidays</span><span>Administrative</span><span class="k aqua"></span><span></span><span>internal</span><span class="k rec">recorded</span><span></span><span class="pg">0 %</span><span></span><span></span><span class="cb"><i></i></span><span class="cb"><i></i></span></div>
  <div class="row"><span class="r">7</span><span>4</span><span>test</span><span>Internal</span><span></span><span></span><span></span><span class="k rec">recorded</span><span></span><span class="pg">0 %</span><span></span><span>11/03/2020</span><span class="cb"><i></i></span><span class="cb"><i></i></span></div>
  <div class="row alt"><span class="r">8</span><span>5</span><span>ProjectServer</span><span>Internal</span><span></span><span></span><span></span><span class="k rec">recorded</span><span></span><span class="pg">0 %</span><span></span><span>11/03/2020</span><span class="cb"><i></i></span><span class="cb"><i></i></span></div>
  <div class="row last"><span class="r">9</span><span>6</span><span>PROJET - PéRIODE D'ABSENCE</span><span>Administrative</span><span></span><span></span><span></span><span class="k rec">recorded</span><span></span><span class="pg">0 %</span><span></span><span></span><span class="cb"><i></i></span><span class="cb"><i></i></span></div>
</section>
<svg class="gdash"><rect width="1744" height="6" fill="url(#dashGreen)"/></svg>

<div class="lower">
<section class="detail">
  <div class="dhead">
    <svg class="g"><use href="#gear"/></svg><h1>Project</h1><h1 class="nm">#4 - project two</h1>
    <span class="st">recorded</span>
    <span class="date"><svg><use href="#calpage"/></svg><b>22/06<br>2019</b><svg class="pen"><use href="#pencil"/></svg></span>
    <span class="ava">E</span>
    <div class="dtools"><span><svg><use href="#newdoc"/></svg></span><span><svg><use href="#save"/></svg></span><span><svg><use href="#refresh"/></svg></span><span><svg><use href="#copy"/></svg></span><span><svg><use href="#cross"/></svg></span><span><svg><use href="#print"/></svg></span><span><svg><use href="#pdf"/></svg></span><span><svg><use href="#mail"/></svg></span><span><svg><use href="#rss"/></svg></span><span><svg viewBox="0 0 32 32"><use href="#save" width="20" height="20"/><use href="#save" x="11" y="11" width="20" height="20"/></svg></span><span><svg><use href="#chat"/></svg></span><span class="dash"><svg><use href="#attach"/></svg></span></div>
  </div>
  <div class="cols">
  <div class="col c1">
    <h2>Description</h2>
    <div class="form f14">
      <div><label>id :</label><span class="plain">#&nbsp; 4</span></div>
      <div><label>name :</label><span class="in w383 req">project two<i class="cur"></i></span></div>
      <div><label>type :</label><span class="se w342 req">Time &amp; Materials</span><svg class="mg"><use href="#mag"/></svg><svg class="go"><use href="#goto"/></svg></div>
      <div><label>organization :</label><span class="se w382"></span></div>
      <div><label>category :</label><span class="se w342"></span><svg class="mg"><use href="#mag"/></svg><svg class="go"><use href="#goto"/></svg></div>
      <div><label>customer :</label><span class="se w342">client two</span><svg class="mg"><use href="#mag"/></svg><svg class="go"><use href="#goto"/></svg></div>
      <div><label>bill contact :</label><span class="se w342"></span><svg class="mg"><use href="#mag"/></svg><svg class="go"><use href="#goto"/></svg></div>
      <div><label>project code :</label><span class="in w159">002-002</span></div>
      <div><label>contract code :</label><span class="in w159">X24-001-007</span></div>
      <div><label>customer code :</label><span class="in w159"></span></div>
      <div><label>is sub-project of :</label><span class="se w342"></span><svg class="mg"><use href="#mag"/></svg><svg class="go"><use href="#goto"/></svg></div>
      <div><label>sponsor :</label><span class="se w382"></span></div>
      <div class="mgr"><label>manager</label><b class="av">E</b><span class="se w188">external project leader two</span><span class="act w184"><svg><use href="#enter"/></svg>assign to me</span></div>
      <div class="clr"><label>color :</label><i class="swatch"></i><span class="pick"><svg><use href="#palette"/></svg><svg class="caret"><use href="#caret"/></svg></span><span class="rst">reset</span></div>
    </div>
    <p class="cap">description</p>
    <div class="ed">
      <div class="bar"><div class="l1"><svg viewBox="0 0 400 20"><use href="#tb1"/></svg><b>B</b><em>I</em><u>U</u><em class="tx">T<sub>x</sub></em><b class="ca">A</b><b class="cb2">A</b></div><div class="l2"><svg viewBox="0 0 250 20"><use href="#tb2"/></svg><span>Font</span><span>Size</span></div></div>
      <div class="body"><p>1st project</p><p>This project has 2 sub-projects</p></div>
      <div class="foot"><svg viewBox="0 0 8 8"><path d="M8 0V8H0Z" fill="#ddd"/></svg></div>
    </div>
    <p class="cap cap2">objectives</p>
    <div class="ed e2">
      <div class="bar"><div class="l1"><svg viewBox="0 0 400 20"><use href="#tb1"/></svg><b>B</b><em>I</em><u>U</u><em class="tx">T<sub>x</sub></em><b class="ca">A</b><b class="cb2">A</b></div><div class="l2"><svg viewBox="0 0 250 20"><use href="#tb2"/></svg><span>Font</span><span>Size</span></div></div>
      <div class="body"></div>
      <div class="foot"><svg viewBox="0 0 8 8"><path d="M8 0V8H0Z" fill="#ddd"/></svg></div>
    </div>
    <h2 class="pre">Predecessor element<i>0</i></h2>
    <div class="t tpre th"><span><svg><use href="#plus"/></svg></span><span>element</span><span>name</span><span>status</span><span>end date</span></div>
  </div>

  <div class="col c2">
    <h2>Allocations to projects<i>6</i></h2>
    <div class="alloc">
      <div class="t ta th"><span><svg><use href="#plus"/></svg></span><span>id</span><span>resource</span><span>profile</span><span>start date</span><span>end date</span><span>rate (%)</span></div>
      <div class="t ta"><span class="ic"><svg><use href="#pencil"/></svg><svg><use href="#cross"/></svg><svg><use href="#swap"/></svg></span><span>1</span><span class="lf">admin</span><span>Administrator</span><span></span><span></span><span>100</span></div>
      <div class="t ta"><span class="ic"><svg><use href="#pencil"/></svg><svg><use href="#cross"/></svg><svg><use href="#swap"/></svg></span><span>9</span><span class="lf">analyst C</span><span>Project Member</span><span></span><span></span><span>100</span></div>
      <div class="t ta"><span class="ic"><svg><use href="#pencil"/></svg><svg><use href="#cross"/></svg><svg><use href="#swap"/></svg></span><span>12</span><span class="lf">multi developer</span><span>Project Member</span><span></span><span></span><span>20</span></div>
      <div class="t ta"><span class="ic"><svg><use href="#pencil"/></svg><svg><use href="#cross"/></svg><svg><use href="#swap"/></svg></span><span>3</span><span class="lf">project manager</span><span>Project Leader</span><span></span><span></span><span>20</span></div>
      <div class="t ta"><span class="ic"><svg><use href="#pencil"/></svg><svg><use href="#cross"/></svg><svg><use href="#swap"/></svg></span><span>11</span><span class="lf">swing developer</span><span>Project Member</span><span></span><span></span><span>100</span></div>
      <div class="t ta th"><span><svg><use href="#plus"/></svg></span><span>id</span><span>contact</span><span>profile</span><span>start date</span><span>end date</span><span>rate (%)</span></div>
      <div class="t ta tall"><span class="ic"><svg><use href="#pencil"/></svg><svg><use href="#cross"/></svg></span><span>6</span><span class="lf">external project leader<br>two</span><span>External Project<br>Leader</span><span></span><span></span><span>100</span></div>
      <div class="t ta th"><span><svg><use href="#plus"/></svg></span><span>id</span><span>user</span><span>profile</span><span>start date</span><span>end date</span><span>rate (%)</span></div>
    </div>
    <h2 class="tre">Treatment</h2>
    <div class="form f2c">
      <div><label class="nc">status</label><b class="dot o"></b><span class="se w169 req">recorded</span><span class="act w164"><svg><use href="#enter"/></svg>qualified</span><svg class="mg"><use href="#mag"/></svg><svg class="go"><use href="#goto"/></svg></div>
      <div><label class="nc">health status</label><b class="dot g"></b><span class="se w342">secured</span><svg class="mg"><use href="#mag"/></svg><svg class="go"><use href="#goto"/></svg></div>
      <div><label class="nc">quality level</label><b class="dot g"></b><span class="se w342">conform</span><svg class="mg"><use href="#mag"/></svg><svg class="go"><use href="#goto"/></svg></div>
      <div><label class="nc">trend</label><b class="dot y"></b><span class="se w342">even</span><svg class="mg"><use href="#mag"/></svg><svg class="go"><use href="#goto"/></svg></div>
      <div><label>overall progress :</label><span class="se w342">100%</span><svg class="mg"><use href="#mag"/></svg><svg class="go"><use href="#goto"/></svg></div>
      <div><label>fix planning :</label><i class="chk"></i><em>do not include in planning calculation</em></div>
      <div><label>non extendable project :</label><i class="chk"></i><em>forbid to add or remove items in planning</em></div>
      <div><label>under construction :</label><i class="chk"></i><em>the project is not started yet</em></div>
      <div><label>exclude from global plan :</label><i class="chk"></i><em>do not see all items on the global planning view</em></div>
      <div><label>handled :</label><i class="chk"></i><i class="dt"></i></div>
      <div><label>done :</label><i class="chk"></i><i class="dt"></i></div>
      <div><label>closed :</label><i class="chk"></i><i class="dt"></i><i class="chk c2k"></i><em>cancelled</em></div>
    </div>
    <h2 class="prod">Products linked to this project</h2>
    <div class="t tv th"><span><svg><use href="#plus"/></svg></span><span>product</span><span>start date</span><span>end date</span><span>closed</span></div>
    <h2 class="vers">Versions linked to this project<i>2</i></h2>
    <div class="t tv th"><span><svg><use href="#plus"/></svg></span><span>version</span><span>start date</span><span>end date</span><span>closed</span></div>
    <div class="t tv vr"><span class="ic"><svg><use href="#pencil"/></svg><svg><use href="#cross"/></svg></span><span class="lf">swing application V1.0</span><span class="pink">[01/01/2018]</span><span></span><span><i class="bx"></i></span></div>
    <h2 class="sub">Sub projects</h2>
    <p class="sublab">Sub projects :</p>
    <div class="succ">
      <h2>Successor element<i>0</i></h2>
      <div class="t tsu th"><span><svg><use href="#plus"/></svg></span><span>element</span><span>name</span><span>status</span></div>
    </div>
  </div>

  <div class="col c3">
    <h2>Progress</h2>
    <div class="band b1">Dates and durations</div>
    <div class="g1 hd"><b></b><b>validated</b><b>planned</b><b>real</b><b></b><b>requested</b></div>
    <div class="g1"><label>start date :</label><i class="v">06/11/2015</i><i class="v ro">11/03/2020</i><i class="v ro"></i><s></s><i class="v">12/03/2012</i></div>
    <div class="g1"><label>end date :</label><i class="v">29/02/2016</i><i class="v ro late">04/05/2020</i><i class="v ro"></i><s></s><i class="v">24/08/2015</i></div>
    <div class="g1 du"><label>duration :</label><span><i class="v">82</i>d</span><span><i class="v ro">39</i>d</span><span><i class="v ro"></i>d</span><s></s><span><i class="v">894</i>d</span></div>
    <div class="band b2">Costs and works</div>
    <div class="g2 hd"><b></b><b>validated</b><b>assigned</b><b>real</b><b>left</b><b>reassessed</b></div>
    <div class="g2 wk"><label>work :</label><span><i class="v">0</i>d</span><span><i class="v ro">0</i>d</span><span><i class="v ro">0</i>d</span><span><i class="v ro">9</i>d</span><span><i class="v ro">9</i>d</span></div>
    <div class="g2"><label>cost :</label><span><i class="v"></i>€</span><span><i class="v ro">0</i>€</span><span><i class="v ro">0</i>€</span><span><i class="v ro">4 500</i>€</span><span><i class="v ro">4 500</i>€</span></div>
    <div class="g2"><label>expense :</label><span><i class="v"></i>€</span><span><i class="v ro">0</i>€</span><span><i class="v ro">0</i>€</span><span><i class="v ro">0</i>€</span><span><i class="v ro">0</i>€</span></div>
    <div class="g2"><label>reserve :</label><s></s><s></s><s></s><span><i class="v ro">0</i>€</span></div>
    <div class="g2"><label>total cost :</label><span><i class="v ro">0</i>€</span><span><i class="v ro">0</i>€</span><span><i class="v ro">0</i>€</span><span><i class="v ro">4 500</i>€</span><span><i class="v ro">4 500</i>€</span></div>
    <div class="band b3">Steering</div>
    <div class="ln"><label>progress :</label><q class="q1">0 %</q><label class="q2">expected :</label><q class="q3">0 %</q><label class="q4">wbs :</label><q>2</q></div>
    <div class="ln"><label>margin :</label><i class="v ro m1">0</i><q class="m2">d&nbsp;&nbsp; %</q><i class="v ro m3"></i><q>€&nbsp;&nbsp; %</q></div>
    <div class="ln"><label>priority :</label><i class="v m4">500</i></div>
    <h2 class="lk">Linked Elements<i>0</i></h2>
    <div class="t tl th"><span><svg><use href="#plus"/></svg></span><span>element</span><span>name</span><span>status</span><span>resp.</span></div>
    <h2 class="at">Attachments<i>1</i></h2>
    <div class="t tat th"><span><svg><use href="#plus"/></svg><svg><use href="#weblink"/></svg></span><span>id</span><span>file</span></div>
    <div class="t tat ar"><span class="ic"><svg><use href="#weblink"/></svg><svg><use href="#cross"/></svg></span><span>#5</span><span class="fl"><svg><use href="#file"/></svg><svg class="n"><use href="#note"/></svg>Dojo Toolkit<span class="mini"><svg><use href="#cal"/></svg><small>03/05</small></span><b class="av">A</b></span></div>
    <h2 class="nt">Notes<i>0</i></h2>
    <div class="t tn th"><span><svg><use href="#plus"/></svg></span><span>id</span><span>note</span></div>
  </div>
  </div>
</section>
<div class="split2"><svg><rect width="5" height="721" fill="url(#dashRight)"/></svg></div>
<section class="stream">
  <div class="shead"><b>Activity Stream</b><svg><use href="#monitor"/></svg></div>
  <p>No notes in this element</p>
  <div class="ta2"><span>Enter your text here</span><i>...</i></div>
</section>
</div>
</div>
</div>
<div class="burger"><i></i><i></i><i></i></div>
</div>
</body>
</html>
```
FILE: styles.css
```css
* { box-sizing: border-box; }
body { margin: 0; background: #fdfdfd; }
p, h1, h2 { margin: 0; }
i, em { font-style: normal; }
q::before, q::after { content: none; }
s { text-decoration: none; }
.defs { position: absolute; width: 0; height: 0; }
.app { position: relative; width: 1920px; height: 1080px; overflow: hidden; display: flex; flex-direction: column; font: 9.5px/1 "DejaVu Sans Condensed", "DejaVu Sans", sans-serif; color: #b4b4b4; white-space: nowrap; border-bottom: 1px solid #ddd; }
svg { display: block; opacity: .34; flex: none; }
.caret { width: 6px; height: 4px; opacity: .45; fill: #444; }
.i11 { width: 11px; height: 12px; } .i15 { width: 15px; height: 15px; } .i17 { width: 17px; height: 15px; } .i21 { width: 19px; height: 19px; background: #fff; border-radius: 4px; opacity: .4; } .i23 { width: 24px; height: 23px; }

/* top bar */
.topbar { height: 25px; display: flex; align-items: center; padding-left: 6px; background: linear-gradient(#dcdaf0, #cdcbdc); border-bottom: 1px solid #f8f8fb; color: #fff; flex: none; }
.tbtn { height: 17px; border: 1px solid #fff; border-radius: 4px; display: flex; align-items: center; justify-content: center; background: #e8e7f0; }
.w25 { width: 25px; } .w24 { width: 24px; margin-left: 1px; }
.off { background: none; border-color: #e8e7f0; }
.newtab { width: 52px; margin-left: 7px; background: #f3f3f7; font: bold 6.500px/1 "DejaVu Sans", sans-serif; color: #c2c2cc; text-shadow: 0 0 2px #fff; justify-content: flex-start; padding-left: 6px; gap: 1px; }
.proj { font-size: 11.700px; width: 53px; margin-left: 17px; }
.projsel { width: 195px; height: 18px; background: #fff; border: 1px solid #e3e3ea; border-radius: 3px; display: flex; justify-content: space-between; align-items: center; padding: 0 3px; color: #b0b0b0; font-size: 9.700px; }
.projsel em { font-style: italic; }
.sbtn { width: 19px; height: 18px; margin-left: 5px; background: #f6f6f9; border: 1px solid #fff; border-radius: 3px; display: flex; align-items: center; justify-content: center; }
.sbtn + .sbtn { margin-left: 3px; }
.sbtn.wide { width: 26px; }
.apptitle { font-size: 12.500px; width: 90px; margin-left: 538px; padding-bottom: 1px; }
.ver { width: 82px; height: 24px; margin-left: 617px; border: 1px solid #fff; border-radius: 4px; background: #e6e4f0; display: flex; justify-content: space-between; align-items: center; padding: 0 1px 0 5px; color: #aaa8ee; font-size: 9.700px; line-height: 10.500px; text-align: center; }
.usr, .scr { height: 24px; border: 1px solid #fff; border-radius: 4px; background: #f5f5f8; display: flex; align-items: center; color: #aaa; font-size: 9.500px; }
.usr { width: 84px; margin-left: 3px; padding-left: 6px; gap: 6px; }
.usr .caret { margin-left: 5px; }
.scr { width: 48px; margin-left: 4px; padding-left: 4px; gap: 11px; }

/* shortcut tabs */
.tabbar { height: 41px; display: flex; background: linear-gradient(#dcdaf0, #cccadb); border-bottom: 2px solid #e2e2e6; flex: none; }
.allmenus { width: 171px; height: 24px; margin: 7px 0 0 2px; border: 1px solid #fff; border-radius: 8px; display: flex; align-items: center; gap: 4px; padding-left: 7px; color: #fff; font-size: 9.500px; font-weight: bold; }
.tabs { display: flex; gap: 4px; width: 1701px; margin-left: 29px; padding-top: 1px; overflow: hidden; }
.tab { width: 41.05px; height: 38px; flex: none; border-radius: 8px 8px 0 0; background: linear-gradient(#e6e5ee, #dedde6); display: grid; justify-items: center; }
.tab.on { background: #fafafc; }
.tab > svg { grid-area: 1 / 1; width: 24px; height: 24px; align-self: end; margin-bottom: 1px; }
.tab > span { grid-area: 1 / 1; align-self: start; width: 41px; text-align: center; font: 6.400px/7px "DejaVu Sans", sans-serif; color: #c2c2c8; background: rgba(249,249,252,.72); border-radius: 8px 8px 0 0; z-index: 1; }
.tab > span { display: grid; justify-content: center; }
.tab > span { display: block; margin: 0 -4px; }
.more { width: 12px; height: 36px; opacity: 1; margin: 1px 0 0 -2px; }

.main { flex: 1; display: flex; min-height: 0; }

/* sidebar */
.side { width: 171px; display: flex; flex-direction: column; border-left: 1px solid #eee; }
.logo { height: 39px; background: linear-gradient(#cccadb, #dcdaf0); color: #fff; display: flex; align-items: flex-start; padding-left: 8px; font: 30px/21px Lato, "Noto Sans", sans-serif; flex: none; }
.logo span { display: flex; width: 147px; }
.logo svg { width: 29px; height: 29px; opacity: 1; }
.logo i { width: 13px; height: 13px; flex: none; border: 2px solid #eceaf2; border-radius: 7px; margin: 22px 0 0 0; font: 9px/9px "DejaVu Sans"; text-align: center; }
.acc { flex: none; font: 10px/17px "DejaVu Sans", sans-serif; padding-left: 10px; color: #c3c3c3; background: linear-gradient(#f8f8f8, #f1f1f1); border: 1px solid #eaeaea; border-width: 1px 0; }
.menuhead { height: 20px; line-height: 20px; }
.tree { flex: none; height: 785px; margin-top: -2px; display: flex; flex-direction: column; }
.tree div { height: 19.190px; display: flex; align-items: center; gap: 4px; padding-left: 17px; color: #a9a9a9; font-size: 9.400px; background: linear-gradient(90deg, #e4e4e4 50%, transparent 0) 5px 55% / 2px 1px no-repeat; flex: none; }
.tree svg { width: 18px; height: 18px; }
.tree .c { padding-left: 48px; gap: 3px; }
.tree .c svg { width: 17px; }
.tree .x { padding-left: 1px; }
.tree .x b { width: 9px; height: 9px; border: 1px solid #e0e0e0; background: #fafafa; margin-right: 3px; font: 8px/6px "DejaVu Sans"; text-align: center; color: #aaa; flex: none; }
.tree mark { background: #eee; color: inherit; padding: 1px 0; }
.ydash { width: 171px; height: 6px; opacity: 1; margin-left: -1px; }
.a1 { height: 18px; } .a2 { height: 20px; line-height: 19px; } .a3 { height: 19px; margin-top: 1px; line-height: 18px; }
.sp { height: 5px; flex: none; background: #f1f1f1; border-bottom: 1px solid #ddd; }
.links { flex: 1; border-left: 1px solid #ddd; }
.links p { height: 11px; line-height: 10px; font-size: 8.500px; padding-left: 4px; border-bottom: 1px solid #ddd; color: #bbb; background: #fff; }
.links .h { height: 17.500px; line-height: 17px; text-align: center; font-size: 9.500px; background: linear-gradient(#fff, #f7f7f7); }
.a4 { height: 21px; line-height: 19px; }
.split { width: 7px; flex: none; border-right: 1px solid #ddd; background: #f5f5f5; }
.split svg { width: 6px; height: 992px; opacity: 1; }

/* project list */
.content { flex: 1; display: flex; flex-direction: column; min-width: 0; }
.list { flex: none; height: 266px; overflow: hidden; }
.listhead { height: 28px; background: linear-gradient(#dcdaf0, #cdcbdc); display: flex; align-items: center; color: #fff; padding-left: 5px; }
h1 { font-size: 14.300px; line-height: 1; color: #fff; text-shadow: 2px 2px 2px #bbb; }
.cnt { display: grid; width: 34px; }
.cnt svg { grid-area: 1 / 1; width: 23px; height: 23px; margin-top: -4px; }
.cnt b { grid-area: 1 / 1; font-size: 16px; align-self: center; text-shadow: 1px 1px 1px #999; margin-top: -3px; }
.filters { display: flex; align-items: center; margin-left: 360px; font-size: 9.500px; }
.listhead h1 { width: 59px; }
.filters label { text-align: right; padding-right: 6px; }
.filters label:nth-of-type(1) { width: 14px; } .filters label:nth-of-type(2) { width: 45px; } .filters label:nth-of-type(3) { width: 39px; } .filters label:nth-of-type(4) { width: 59px; }
.pill { height: 15px; background: #fff; border-radius: 7px; }
.f1 { width: 93px; } .f2 { width: 173px; }
.combo { width: 248px; height: 17px; background: linear-gradient(90deg, transparent 231px, #ddd 231px 232px, #f6f6f6 232px), #fff; border-radius: 8px 0 0 8px; display: flex; align-items: center; justify-content: flex-end; padding-right: 6px; }
.reset { width: 34px; height: 17px; background: #f8f8fa; border: 1px solid #fff; border-radius: 3px; color: #bbb; font-size: 9.500px; line-height: 15px; text-align: center; margin-left: 3px; }
.tools { display: flex; gap: 1.500px; margin-left: 6px; }
.tools span { width: 25px; height: 23px; border: 1px solid #fff; border-radius: 4px; background: #e3e2ec; display: flex; align-items: center; justify-content: center; gap: 4px; }
.tools span.w { width: 36.500px; }
.tools svg:not(.caret) { width: 18px; height: 18px; }
.cl { margin-left: 11px; width: 33px; font-size: 9.200px; }
.ck { width: 14px; height: 14px; border: 1px solid #fff; border-radius: 4px; }

.row { display: grid; grid-template-columns: 89px 88px 262px 173px 70px 104px 139px 138px 140px 87px 139px 139px 87px 86px; height: 24px; font: 7.250px/1 "DejaVu Sans", sans-serif; color: #c0c0c0; border-bottom: 1px dotted #e4e4e4; background: #fff; }
.row > span { border-right: 1px dotted #e0e0e0; padding: 1px 3px 0 2px; display: flex; align-items: center; min-width: 0; }
.row.alt { background: #fcfcfc; }
.row .r { justify-content: flex-end; }
.row.head { height: 25px; background: linear-gradient(#fff, #f3f3f3); border-bottom: 1px solid #d8d8d8; }
.row.head > span { justify-content: center; border-right: 1px solid #e2e2e2; }
.row > .k { justify-content: center; margin: 0 0 1px 1px; border-right: 0; }
.rec { background: #fee0b0; color: #d3bfa0; }
.yel { background: #fff1b0; color: #d5cc9d; } .grn { background: #c2f0c2; color: #a8cba8; } .red { background: #ffb1b1; color: #fff; }
.violet { background: #d2cbef; } .blue { background: #cddffa; } .sky { background: #daf0f8; } .brick { background: #e8bbbb; } .teal { background: #b1dada; } .aqua { background: #bbe9e5; }
.row.sel { background: linear-gradient(#dcdaf0, #cac8da); color: #fff; }
.row.sel .foc { border: 1px dashed #aaa8e0; margin: -1px 0; padding-left: 1px; }
.row > .pg { justify-content: center; padding-bottom: 3px; background: linear-gradient(#ffe1e3, #ffe1e3) 2px 15px / 81px 2px no-repeat; }
.row > .cb { justify-content: center; padding-bottom: 3px; }
.cb i { width: 9px; height: 9px; border: 1px solid #ddd; border-radius: 1px; background: #fafafa; }
.sel .cb i { background: #fff; border-color: #eee; }
.gdash { width: 1744px; height: 6px; opacity: 1; margin-left: -2px; }

/* detail pane */
.lower { flex: 1; display: flex; min-height: 0; }
.detail { width: 1546px; border-top: 3px solid #f1f1f1; flex: none; display: flex; flex-direction: column; }
.dhead { height: 30px; background: linear-gradient(#dcdaf0, #cbc9da); display: flex; align-items: center; padding-left: 4px; color: #fff; flex: none; }
.dhead .g { width: 24px; height: 25px; margin-top: -4px; }
.dhead h1 { margin-left: 11px; width: 51px; }
.dhead .nm { width: 130px; margin-top: 2px; }
.st { width: 95px; height: 29px; margin: 1px 0 0 495px; background: #fee0b0; color: #d0bda0; text-align: center; font: 7.800px/29px "DejaVu Sans", sans-serif; }
.date { width: 25px; height: 27px; display: grid; margin: -2px 0 0 11px; }
.date > * { grid-area: 1 / 1; }
.date svg { width: 25px; height: 27px; }
.date svg:first-child { opacity: 1; }
.date b { font: 6.600px/7px "DejaVu Sans", sans-serif; color: #bbb; text-align: center; padding-top: 9px; z-index: 1; }
.date .pen { width: 11px; height: 11px; justify-self: end; }
.ava { width: 26px; height: 26px; border-radius: 13px; background: #b9e8cd; border: 1px solid #fff; font-size: 18px; line-height: 24px; text-align: center; margin-left: 32px; margin-top: -2px; }
.dtools { display: flex; gap: 3.300px; margin-left: 282px; }
.dtools span { width: 25.500px; height: 23px; border: 1px solid #fff; border-radius: 4px; background: #e2e1eb; display: flex; align-items: center; justify-content: center; }
.dtools svg { width: 19px; height: 19px; }
.dtools .dash { border-style: dashed; width: 29px; }
.cols { display: flex; padding-left: 4px; gap: 6px; }
.col { width: 504px; padding-top: 4px; display: flex; flex-direction: column; }
h2 { height: 18px; border-radius: 9px; background: linear-gradient(#dad8ee, #d0cee0); color: #fff; font-size: 9.500px; line-height: 17px; padding: 0 5px 1px 14px; display: flex; align-items: center; flex: none; }
h2::before { content: ""; border: 3px solid transparent; border-top: 4px solid #fff; border-bottom: 0; margin: 0 4px 0 -10px; }
h2 i { margin-left: auto; width: 34px; height: 12px; border: 1px solid #fff; border-radius: 5px; font-size: 7px; line-height: 11px; text-align: center; }

/* forms */
.form > div { height: 19px; display: flex; align-items: center; }
.form label, .ln label, .g1 label, .g2 label { color: #c3c1d4; text-align: right; font-size: 9.400px; padding-top: 2px; }
.f14 { padding-top: 4px; }
.f14 label { width: 113px; margin-right: 5px; }
.plain { color: #bcbcbc; padding-left: 5px; }
.in, .se { border: 1px solid #e3e3e3; background: #fff; color: #a9a9a9; font-size: 9.500px; display: flex; align-items: center; padding-left: 3px; flex: none; }
.in { height: 15px; } .se { height: 17px; }
.se::after { content: ""; margin-left: auto; width: 15px; height: 15px; border-left: 1px solid #ddd; background: linear-gradient(to bottom right, #aaa 50%, transparent 50%) 7.500px 6px / 3px 4px no-repeat, linear-gradient(to bottom left, #aaa 50%, transparent 50%) 4.500px 6px / 3px 4px no-repeat, #fafafa; }
.req { border-left: 2px solid #f8b0b0; }
.cur { width: 1px; height: 11px; background: #555; }
.w383 { width: 383px; } .w382 { width: 382px; } .w342 { width: 342px; } .w159 { width: 159px; } .w188 { width: 188px; } .w184 { width: 184px; } .w169 { width: 169px; } .w164 { width: 164px; }
.mg { width: 14px; height: 14px; margin-left: 6px; } .go { width: 14px; height: 14px; margin-left: 6px; }
.mgr label { width: 94px; margin-right: 7px; }
.av { width: 15px; height: 15px; border-radius: 8px; background: #a9e2bf; color: #fff; text-align: center; font-size: 11px; font-weight: normal; line-height: 15px; margin-right: 2px; flex: none; }
.act { height: 17px; border: 1px solid #e2e2e2; border-radius: 9px; display: flex; align-items: center; gap: 4px; padding-left: 3px; margin-left: 6px; color: #aaa; background: #fcfcfc; }
.act svg { width: 13px; height: 13px; }
.swatch { width: 58px; height: 16px; border-radius: 8px; background: #e6b9b9; margin-left: -1px; }
.pick, .rst { height: 18px; border: 1px solid #e4e4e4; border-radius: 4px; display: flex; align-items: center; justify-content: center; gap: 5px; margin-left: 2px; color: #bbb; background: #fcfcfc; }
.pick { width: 33px; } .rst { width: 31px; margin-left: 1px; padding-top: 1px; }
.pick svg:first-child { width: 13px; height: 13px; }
.cap { color: #c3c1d4; font-size: 9.400px; height: 13px; padding-top: 3px; flex: none; }
.form .clr { height: 20px; }
.ed { border: 1px solid #eaeaea; border-bottom: 1px solid #ececec; border-right: 0; flex: none; height: 151px; font-family: "Liberation Sans", Arial, sans-serif; }
.bar { height: 59px; border-bottom: 1px solid #e8e8e8; padding-top: 3px; }
.l1, .l2 { height: 26px; display: grid; grid-template-columns: 13px 22px 22px 27px 215px 22px 1fr; font-size: 12px; color: #bbb; align-items: center; }
.l1 svg { grid-area: 1 / 1 / 2 / 8; width: 400px; height: 20px; margin-left: 16px; opacity: .5; }
.l1 b, .l1 em, .l1 u { grid-row: 1; }
.l1 > b:nth-of-type(1) { grid-column: 2; }
.l1 em { font: italic bold 13px "Liberation Serif", serif; }
.l1 > em:nth-of-type(1) { grid-column: 3; padding-left: 2px; }
.l1 u { grid-column: 4; font-weight: bold; padding-left: 1px; }
.l1 .tx { grid-column: 5; font-size: 12px; line-height: 12px; }
.l1 sub { font-size: 8px; line-height: 1px; }
.l1 .ca { grid-column: 6; }
.l1 .cb2 { grid-column: 7; justify-self: start; margin-left: 6px; background: #c8c8c8; color: #fff; font-size: 9px; padding: 1px 2px; }
.l2 { grid-template-columns: 16px 49px 40px 1fr; font-size: 10px; }
.l2 svg { grid-area: 1 / 1 / 2 / 5; width: 250px; height: 20px; margin-left: 16px; opacity: .5; }
.l2 span { grid-row: 1; } .l2 span:nth-of-type(1) { grid-column: 2; } .l2 span:nth-of-type(2) { grid-column: 3; }
.body { height: 69px; background: #fff; padding: 16px 0 0 16px; border-bottom: 1px solid #e8e8e8; }
.body p { font-size: 10.100px; line-height: 16px; color: #b3b3b3; }
.foot { height: 21px; display: flex; justify-content: flex-end; align-items: flex-end; padding: 0 4px 3px 0; }
.foot svg { width: 8px; height: 8px; opacity: 1; }
.cap2 { height: 11px; padding-top: 1px; }
.ed.e2 { height: 147px; border-bottom: 0; }
.e2 .body { height: 65px; }
.pre { margin-top: 3px; }

/* tables */
.t { display: grid; background: #fff; color: #c0c0c0; font: 7.650px/1 "DejaVu Sans", sans-serif; border: 1px solid #e1e1e1; border-top: 0; flex: none; height: 15.050px; }
.t > span { border-left: 1px solid #e1e1e1; display: flex; justify-content: center; align-items: flex-start; padding-top: 1px; text-align: center; min-width: 0; line-height: 9.500px; }
.t > span:first-child { border-left: 0; }
.t svg { width: 13px; height: 13px; }
.t.th { height: 18px; border-top: 1px solid #e1e1e1; background: linear-gradient(#fff, #f5f5f5); font: 9.500px/1 "DejaVu Sans Condensed", "DejaVu Sans", sans-serif; color: #c6c6c6; }
.t.th > span { align-items: center; padding: 0; gap: 5px; }
.t.th svg { opacity: .4; }
.t .ic { gap: 4px; padding-top: 1px; }
.t > .lf { justify-content: flex-start; padding-left: 4px; text-align: left; }
.tpre { grid-template-columns: 51px 101px 201px 75px 1fr; margin-top: 4px; }
.tsu { grid-template-columns: 59px 118px 237px 1fr; margin-top: 4px; }
.ta { grid-template-columns: 76px 40px 101px 91px 66px 67px 1fr; }
.alloc { padding-top: 4px; height: 153px; flex: none; }
.alloc .th { height: 17.500px; }
.alloc .tall { height: 21.500px; }
.tre { margin-top: 4px; }
.f2c { padding-top: 4px; }
.f2c label { width: 112px; margin-right: 6px; }
.f2c label.nc { width: 93px; margin-right: 8px; }
.dot { width: 15px; height: 16px; border-radius: 8px; margin-right: 2px; } .o { background: #fee0b0; } .g { background: #c2f0c2; } .y { background: #fff1b0; }
.detail svg.g { background: none; }
.f2c .act { margin-left: 5px; margin-right: 3px; }
.chk { width: 15px; height: 14px; border: 1px solid #ddd; border-radius: 4px; background: #fff; margin: -1px 0 0 -1px; }
.form em { color: #c0bfcd; padding: 0 0 3px 2px; font-size: 9.500px; }
.dt { width: 60px; height: 18px; border: 1px solid #e1e1e1; background: #fff; margin-left: 2px; }
.c2k { margin-left: 10px; }
.prod { margin-top: 3px; height: 17px; }
.tv { grid-template-columns: 51px 252px 75px 75px 1fr; margin-top: 4px; }
.vers { margin-top: 3px; }
.vr { height: 16px; margin-top: 0; }
.vr .ic svg { width: 14px; height: 14px; }
.pink { color: #ffb9b9; }
.bx { width: 12px; height: 12px; border: 1px solid #ddd; background: #fafafa; }
.sub { margin-top: 3px; }
.sublab { width: 112px; text-align: right; padding-top: 10px; color: #c3c1d4; height: 67px; }
.succ { margin-left: -2px; }

/* progress column */
.band { height: 18px; border: 1px solid #d8d8d8; border-right: 0; background: linear-gradient(#fff, #f7f7f7); text-align: center; line-height: 17px; color: #c3c3c3; font-size: 9.400px; flex: none; }
.b1 { margin-top: 7px; } .b2 { margin-top: 2px; } .b3 { margin-top: 2px; }
.g1, .g2, .ln { display: grid; height: 19px; align-items: center; flex: none; color: #aaa; }
.g1 { grid-template-columns: 64px 67px 67px 67px 60px 80px; }
.g2 { grid-template-columns: 65px 88px 88px 88px 88px 88px; }
.g1.hd, .g2.hd { height: 11px; color: #c6c4d6; font-size: 9.400px; }
.g2.hd { grid-template-columns: 64px 88px 88px 88px 88px 88px; height: 10px; }
.g1 label, .g2 label { padding-right: 5px; }
.v { height: 17px; border: 1px solid #e1e1e1; background: #fff; display: flex; align-items: center; justify-content: flex-end; padding-right: 3px; color: #a9a9a9; font-size: 9.700px; }
.g1 > .v { width: 59px; }
.ro { background: #fafafa; color: #c9c9c9; }
.late { background: #ffe3e3; color: #d8bcbc; }
.g1 span, .g2 span { display: flex; align-items: center; gap: 2px; }
.g1 span .v { width: 59px; height: 15px; padding-right: 2px; }
.g2 span .v { width: 77px; height: 15px; padding-right: 2px; }
.g2 span { gap: 1px; }
.wk span { padding-left: 21px; }
.wk.g2 span .v { width: 59px; }
.ln { display: flex; height: 20px; }
.ln label { width: 60px; margin-right: 5px; flex: none; }
.ln .v { height: 15px; }
.q1 { width: 20px; } .ln .q2 { width: 94px; } .ln .q4 { width: 97px; } .q3 { width: 20px; }
.m1 { width: 59px; } .m2 { width: 66px; padding-left: 2px; } .m3 { width: 77px; margin-left: 2px; margin-right: 2px; } .m4 { width: 37px; margin-left: -1px; }
.lk { margin-top: 3px; }
.tl { grid-template-columns: 26px 76px 276px 75px 1fr; margin-top: 4px; }
.at { margin-top: 2px; height: 17px; }
.tat { grid-template-columns: 51px 25px 1fr; margin-top: 4px; }
.ar { margin-top: 0; height: 19px; }
.tn { grid-template-columns: 51px 25px 1fr; margin-top: 4px; }
.nt { margin-top: 4px; }
.t > .fl { justify-content: flex-start; align-items: center; padding: 0 5px 0 4px; }
.fl .n { margin: 0 5px 0 10px; }
.mini { margin-left: auto; display: grid; width: 17px; margin-right: 4px; }
.mini svg { grid-area: 1 / 1; width: 17px; height: 17px; }
.mini small { grid-area: 1 / 1; font-size: 5.500px; align-self: end; line-height: 9px; }
.fl .av { height: 16px; margin-right: -1px; }

/* activity stream */
.split2 { width: 7px; flex: none; border-right: 1px solid #ddd; }
.split2 svg { width: 6px; height: 721px; opacity: 1; margin-top: -1px; }
.stream { flex: 1; display: flex; flex-direction: column; border-right: 1px solid #ddd; }
.shead { height: 27px; border-top: 3px solid #f3f3f3; background: linear-gradient(#fdfdfd, #f1f1f1); display: flex; align-items: center; justify-content: space-between; padding: 0 2px 0 5px; color: #fff; font-size: 13.500px; text-shadow: 1px 2px 2px #aaa; flex: none; }
.shead b { margin-top: 2px; }
.shead svg { width: 18px; height: 18px; margin-top: -3px; }
.stream p { padding: 17px 0 0 14px; font-size: 9.200px; color: #b5b5b5; flex: 1; }
.ta2 { height: 54px; border: 1px solid #d4d4d4; background: #fff; display: flex; justify-content: space-between; padding: 3px 4px; font-size: 9.200px; margin-left: -1px; }
.ta2 i { width: 12px; height: 12px; border-radius: 6px; background: #f2f2f2; align-self: flex-end; text-align: center; line-height: 9px; }
.burger { position: absolute; left: 175px; top: 1062px; width: 16px; height: 14px; display: flex; flex-direction: column; justify-content: space-between; }
.burger i { height: 3px; background: #c9d8dc; }
```
